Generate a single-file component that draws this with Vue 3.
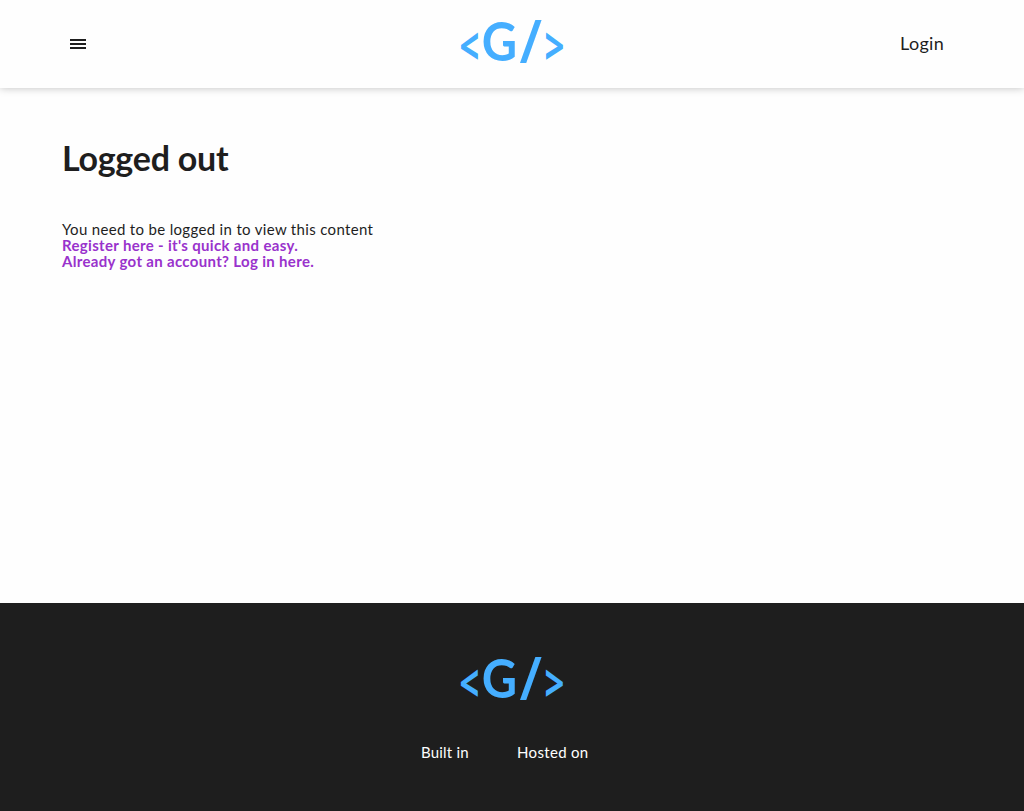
<script setup>
import { h } from 'vue'

const glyphs = [
  { char: '<', x: -0.5, y: 44.5, size: 51, stretch: 0.68, weight: 700, font: 'Open Sans' },
  { char: 'G', x: 21.8, y: 41, size: 53, stretch: 0.92, weight: 700, font: 'Lato' },
  { char: '/', x: 59.5, y: 43, size: 59.5, stretch: 0.97, weight: 600, font: 'Open Sans' },
  { char: '>', x: 84.5, y: 44.5, size: 51, stretch: 0.68, weight: 700, font: 'Open Sans' },
]

const BrandLogo = () =>
  h(
    'svg',
    { width: 104, height: 48, viewBox: '0 0 104 48', style: { display: 'block', overflow: 'visible' } },
    glyphs.map((g) =>
      h(
        'text',
        {
          transform: `translate(${g.x} ${g.y}) scale(${g.stretch} 1)`,
          fill: '#45aeff',
          'font-family': `${g.font}, sans-serif`,
          'font-weight': g.weight,
          'font-size': g.size,
          'letter-spacing': 0,
        },
        g.char,
      ),
    ),
  )
</script>

<template>
  <div class="page">
    <header class="topbar">
      <button class="menu" aria-label="Menu">
        <svg width="16" height="10" viewBox="0 0 16 10" shape-rendering="crispEdges">
          <path d="M0 0h16v2H0zM0 4h16v2H0zM0 8h16v2H0z" fill="#1e1e1e" />
        </svg>
      </button>
      <BrandLogo />
      <a class="login">Login</a>
    </header>
    <main class="content">
      <h1>Logged out</h1>
      <p>You need to be logged in to view this content</p>
      <p><a class="link">Register here - it's quick and easy.</a></p>
      <p><a class="link">Already got an account? Log in here.</a></p>
    </main>
    <footer class="footer">
      <BrandLogo />
      <div class="credits">
        <span class="built">Built in</span>
        <span>Hosted on</span>
      </div>
    </footer>
  </div>
</template>

<style>
body {
  margin: 0;
  background: #fefefe;
}
</style>

<style scoped>
.page {
  display: flex;
  flex-direction: column;
  height: 811px;
  overflow: hidden;
  color: #1e1e1e;
  font-family: Lato, sans-serif;
  font-size: 15px;
  line-height: 16px;
  letter-spacing: 0.33px;
}
.topbar {
  display: grid;
  grid-template-columns: 1fr 104px 1fr;
  align-items: center;
  box-sizing: border-box;
  height: 88px;
  flex: none;
  padding: 0 70px;
  background: #fefefe;
  box-shadow: 0 0 8px rgba(0, 0, 0, 0.25);
}
.menu {
  justify-self: start;
  display: flex;
  padding: 0;
  border: 0;
  background: none;
}
.login {
  justify-self: end;
  width: 54px;
  padding-bottom: 2px;
  font-size: 18px;
  line-height: 24px;
}
.content {
  flex: 1;
  padding: 46px 62px 0;
}
h1 {
  margin: 0 0 39px;
  font-size: 34px;
  line-height: 48px;
  font-weight: 700;
  letter-spacing: -0.25px;
}
p {
  margin: 0;
}
.link {
  color: #9932cc;
  font-weight: 700;
}
.footer {
  display: flex;
  flex-direction: column;
  align-items: center;
  box-sizing: border-box;
  flex: none;
  height: 208px;
  padding-top: 54px;
  background: #1e1e1e;
  color: #fefefe;
}
.credits {
  display: flex;
  gap: 48px;
  width: 182px;
  margin-top: 39px;
  white-space: nowrap;
}
.built {
  width: 48px;
  letter-spacing: 0.2px;
}
</style>
